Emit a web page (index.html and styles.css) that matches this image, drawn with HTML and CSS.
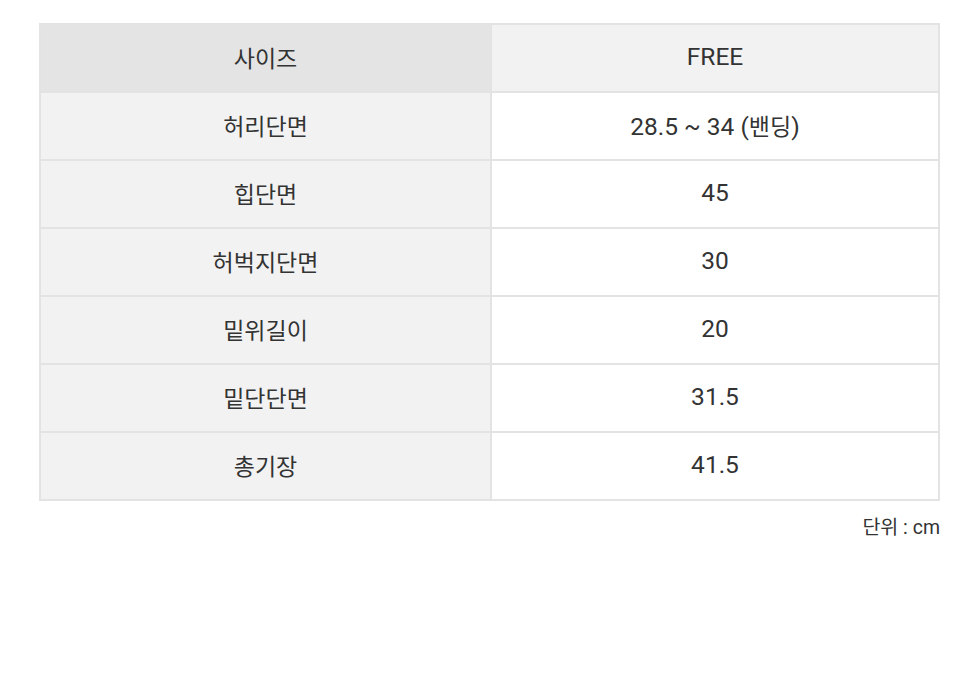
FILE: index.html
```html
<!DOCTYPE html>
<html lang="ko">
<head>
<meta charset="utf-8">
<link rel="stylesheet" href="styles.css">
</head>
<body>
<div class="wrap">
  <table class="size">
    <tr class="head"><th>사이즈</th><td>FREE</td></tr>
    <tr><th>허리단면</th><td>28.5 ~ 34 (<span class="ko">밴딩</span>)</td></tr>
    <tr><th>힙단면</th><td>45</td></tr>
    <tr><th>허벅지단면</th><td>30</td></tr>
    <tr><th>밑위길이</th><td>20</td></tr>
    <tr><th>밑단단면</th><td>31.5</td></tr>
    <tr><th>총기장</th><td>41.5</td></tr>
  </table>
  <p class="unit">단위 : cm</p>
</div>
</body>
</html>
```
FILE: styles.css
```css
html, body { margin: 0; padding: 0; background: #fff; }
body { font-family: Roboto, "Noto Sans CJK KR", sans-serif; color: #333; }
.wrap { padding: 23px 40px 0 39px; }
.size { width: 100%; border-collapse: collapse; table-layout: fixed; border: 2px solid #e3e3e3; }
.size th, .size td {
  height: 68px; padding: 0 0 3px; border: 2px solid #e3e3e3;
  font-weight: 400; text-align: center; vertical-align: middle;
  box-sizing: border-box;
}
.size th { background: #f2f2f2; width: 451px; font-size: 23px; }
.size td { background: #fff; font-size: 24.5px; }
.size .ko { font-size: 23px; }
.size .head th { background: #e4e4e4; }
.size .head td { background: #f2f2f2; }
.unit { margin: 10px 0 0; text-align: right; font-size: 19.5px; }
```
